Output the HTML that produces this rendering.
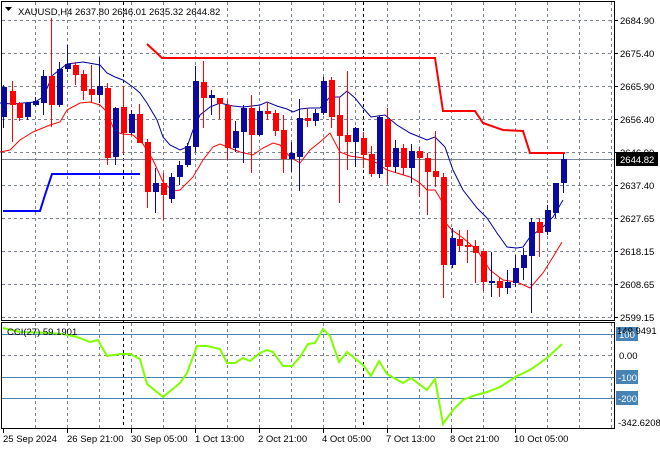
<!DOCTYPE html>
<html><head><meta charset="utf-8"><style>
html,body{margin:0;padding:0;background:#fff}
svg{display:block;font-family:"Liberation Sans",Tahoma,sans-serif;font-size:9.5px}
</style></head><body>
<svg width="660" height="450" viewBox="0 0 660 450" xmlns="http://www.w3.org/2000/svg">
<rect width="660" height="450" fill="#fff"/>
<g stroke="#7a8490" stroke-width="1" stroke-dasharray="3,3" fill="none">
<path d="M2 20.5H614M2 53.5H614M2 86.5H614M2 119.5H614M2 152.5H614M2 185.5H614M2 218.5H614M2 251.5H614M2 284.5H614M2 317.5H614"/>
<path d="M35.5 2V320M67.5 2V320M99.5 2V320M131.5 2V320M163.5 2V320M195.5 2V320M227.5 2V320M259.5 2V320M291.5 2V320M323.5 2V320M355.5 2V320M387.5 2V320M419.5 2V320M451.5 2V320M483.5 2V320M515.5 2V320M547.5 2V320M579.5 2V320M611.5 2V320"/>
<path d="M35.5 323V428M67.5 323V428M99.5 323V428M131.5 323V428M163.5 323V428M195.5 323V428M227.5 323V428M259.5 323V428M291.5 323V428M323.5 323V428M355.5 323V428M387.5 323V428M419.5 323V428M451.5 323V428M483.5 323V428M515.5 323V428M547.5 323V428M579.5 323V428M611.5 323V428"/>
<path d="M2 355.5H614"/>
</g>
<g stroke="#000" stroke-dasharray="3,3"><path d="M123.5 2V428M363.5 2V428"/></g>
<path d="M2 159.5H614" stroke="#7a8490"/>
<g stroke="#4682b4"><path d="M2 334.5H614M2 377.5H614M2 398.5H614"/></g>
<rect x="1.5" y="1.5" width="613" height="319" fill="none" stroke="#000"/>
<rect x="1.5" y="322.5" width="613" height="106" fill="none" stroke="#000"/>
<polyline fill="none" stroke="#0000a0" stroke-width="1" points="0,103 12,104 35,102 43,97 53,75 67,64 83,62 100,65 107,73 115,77 123,80 133,87 140,93 147,103 157,120 163,137 170,145 180,150 187,147 193,130 200,115 210,107 220,103 233,106 243,107 260,105 267,102 277,106 287,109 293,112 300,109 310,108 320,108 330,97 340,97 347,91 355,98 363,108 371,117 385,115 397,125 410,133 427,140 435,137 445,147 453,170 463,190 477,208 487,218 497,233 507,247 517,248 523,247 530,237 543,227 553,217 563,200"/>
<polyline fill="none" stroke="#ff0000" stroke-width="1" points="0,152 10,150 20,140 33,132 50,125 60,122 67,110 80,103 90,102 100,105 107,112 115,132 123,134 133,135 143,144 153,160 163,182 173,191 180,190 193,177 203,160 213,147 220,144 230,148 240,152 253,155 263,148 273,143 280,145 290,157 300,163 310,150 320,142 330,133 340,152 350,156 363,158 377,163 387,170 397,173 410,177 420,183 427,190 435,190 443,203 443,220 452,230 463,238 477,250 490,270 503,280 517,282 530,288 543,273 553,257 562,242"/>
<polyline fill="none" stroke="#ff0000" stroke-width="2" points="147,44 162,58 435,58 443,111 475,111 483,123 503,130 523,131 530,153 565,153"/>
<polyline fill="none" stroke="#0000ff" stroke-width="2" points="3,211 40,211 45,195 52,174 140,174"/>
<g stroke-width="1">
<g fill="#0a0aa0" stroke="#0a0aa0">
<path d="M3.5 85V128M27.5 102V120M35.5 97V106M43.5 70V115M59.5 62V107M67.5 45V72M99.5 57V103M115.5 107V165M131.5 110V135M155.5 168V213M171.5 173V203M179.5 161V185M187.5 143V167M195.5 66V152M211.5 90V115M235.5 121V152M243.5 105V163M259.5 107V136M291.5 142V172M299.5 99V191M315.5 109V126M323.5 77V115M355.5 127V167M379.5 116V178M395.5 140V173M411.5 144V183M452.5 228V268M491.5 252V297M507.5 270V294M515.5 255V287M523.5 248V280M531.5 218V313M547.5 205V235M555.5 183V218M563.5 154V193"/>
<g stroke="none">
<rect x="1" y="87" width="6" height="30"/><rect x="25" y="103" width="6" height="14"/><rect x="33" y="101" width="6" height="4"/><rect x="41" y="76" width="6" height="27"/><rect x="57" y="69" width="6" height="36"/><rect x="65" y="64" width="6" height="5"/><rect x="97" y="86" width="6" height="9"/><rect x="113" y="108" width="6" height="49"/><rect x="129" y="114" width="6" height="19"/><rect x="153" y="183" width="6" height="9"/><rect x="169" y="177" width="6" height="22"/><rect x="177" y="165" width="6" height="12"/><rect x="185" y="146" width="6" height="19"/><rect x="193" y="81" width="6" height="66"/><rect x="209" y="95" width="6" height="3"/><rect x="233" y="131" width="6" height="17"/><rect x="241" y="108" width="6" height="24"/><rect x="257" y="111" width="6" height="24"/><rect x="289" y="153" width="6" height="6"/><rect x="297" y="118" width="6" height="39"/><rect x="313" y="113" width="6" height="8"/><rect x="321" y="81" width="6" height="32"/><rect x="353" y="128" width="6" height="14"/><rect x="377" y="117" width="6" height="57"/><rect x="393" y="148" width="6" height="19"/><rect x="409" y="151" width="6" height="17"/><rect x="450" y="238" width="6" height="27"/><rect x="489" y="281" width="6" height="2"/><rect x="505" y="282" width="6" height="6"/><rect x="513" y="268" width="6" height="15"/><rect x="521" y="255" width="6" height="13"/><rect x="529" y="222" width="6" height="34"/><rect x="545" y="210" width="6" height="22"/><rect x="553" y="183" width="6" height="30"/><rect x="561" y="159" width="6" height="24"/>
</g></g>
<g fill="#ff0000" stroke="#ff0000">
<path d="M12.5 81V142M19.5 102V121M51.5 18V127M75.5 62V85M83.5 70V100M91.5 65V103M107.5 83V165M123.5 86V154M139.5 104V143M147.5 139V208M163.5 173V220M203.5 61V128M219.5 98V119M227.5 100V160M251.5 95V173M267.5 102V120M275.5 110V136M283.5 115V173M307.5 108V127M331.5 77V128M339.5 97V203M347.5 71V170M363.5 132V168M371.5 146V177M387.5 108V184M403.5 144V175M419.5 147V197M427.5 153V215M435.5 131V187M443.5 173V298M459.5 230V252M467.5 230V263M475.5 240V283M483.5 251V291M499.5 277V297M539.5 218V257"/>
<g stroke="none">
<rect x="10" y="91" width="6" height="14"/><rect x="17" y="103" width="6" height="15"/><rect x="49" y="76" width="6" height="29"/><rect x="73" y="65" width="6" height="10"/><rect x="81" y="74" width="6" height="17"/><rect x="89" y="89" width="6" height="6"/><rect x="105" y="88" width="6" height="70"/><rect x="121" y="107" width="6" height="26"/><rect x="137" y="114" width="6" height="29"/><rect x="145" y="142" width="6" height="50"/><rect x="161" y="183" width="6" height="12"/><rect x="201" y="82" width="6" height="16"/><rect x="217" y="98" width="6" height="6"/><rect x="225" y="105" width="6" height="43"/><rect x="249" y="108" width="6" height="27"/><rect x="265" y="111" width="6" height="3"/><rect x="273" y="113" width="6" height="18"/><rect x="281" y="130" width="6" height="29"/><rect x="305" y="118" width="6" height="3"/><rect x="329" y="80" width="6" height="37"/><rect x="337" y="115" width="6" height="21"/><rect x="345" y="135" width="6" height="7"/><rect x="361" y="138" width="6" height="17"/><rect x="369" y="154" width="6" height="20"/><rect x="385" y="119" width="6" height="48"/><rect x="401" y="148" width="6" height="20"/><rect x="417" y="151" width="6" height="7"/><rect x="425" y="158" width="6" height="14"/><rect x="433" y="171" width="6" height="6"/><rect x="441" y="177" width="6" height="88"/><rect x="457" y="239" width="6" height="7"/><rect x="465" y="245" width="6" height="2"/><rect x="473" y="246" width="6" height="7"/><rect x="481" y="251" width="6" height="31"/><rect x="497" y="281" width="6" height="7"/><rect x="537" y="222" width="6" height="11"/>
</g></g></g>
<polyline fill="none" stroke="#7fff00" stroke-width="2" points="3,328 20,332 50,333 63,334 77,337 90,342 98,340 107,356 120,354 130,354 140,359 147,384 163,397 180,383 187,373 197,346 207,346 220,349 227,363 235,363 243,358 250,361 260,353 267,350 273,352 283,366 292,366 300,357 308,344 315,343 323,329 330,336 339,362 347,352 363,365 371,376 379,361 387,374 403,383 411,378 427,390 435,379 443,424 453,410 463,400 473,396 487,392 500,387 517,376 530,370 547,358 562,344"/>
<text x="7" y="335" fill="#000">CCI(27) 59.1901</text>
<path d="M5 7H12L8.5 11Z" fill="#000"/>
<text x="18" y="15" fill="#000">XAUUSD,H4  2637.80 2646.01 2635.32 2644.82</text>
<g fill="#000">
<text x="620" y="24">2684.90</text><text x="620" y="57">2675.40</text><text x="620" y="90">2665.90</text><text x="620" y="123">2656.40</text><text x="620" y="156">2646.90</text><text x="620" y="189">2637.40</text><text x="620" y="222">2627.65</text><text x="620" y="255">2618.15</text><text x="620" y="288">2608.65</text><text x="620" y="321">2599.15</text>
</g>
<g stroke="#000"><path d="M614 20.5h4M614 53.5h4M614 86.5h4M614 119.5h4M614 152.5h4M614 185.5h4M614 218.5h4M614 251.5h4M614 284.5h4M614 317.5h4"/></g>
<rect x="616" y="152" width="42" height="14" fill="#000"/>
<text x="620" y="163" fill="#fff">2644.82</text>
<rect x="616" y="327" width="22" height="14" fill="#4682b4"/>
<text x="617" y="334" fill="#000">149.9491</text>
<text x="619" y="338" fill="#fff">100</text>
<text x="619" y="359" fill="#000">0.00</text>
<rect x="616" y="370" width="22" height="14" fill="#4682b4"/><text x="618" y="381" fill="#fff">-100</text>
<rect x="616" y="391" width="22" height="14" fill="#4682b4"/><text x="618" y="402" fill="#fff">-200</text>
<text x="618" y="426" fill="#000">-342.6208</text>
<g fill="#000">
<text x="3" y="442">25 Sep 2024</text><text x="67" y="442">26 Sep 21:00</text><text x="131" y="442">30 Sep 05:00</text><text x="195" y="442">1 Oct 13:00</text><text x="258" y="442">2 Oct 21:00</text><text x="322" y="442">4 Oct 05:00</text><text x="386" y="442">7 Oct 13:00</text><text x="450" y="442">8 Oct 21:00</text><text x="514" y="442">10 Oct 05:00</text>
</g>
<g stroke="#000"><path d="M3.5 429v4M67.5 429v4M131.5 429v4M195.5 429v4M259.5 429v4M323.5 429v4M387.5 429v4M451.5 429v4M515.5 429v4"/></g>
</svg>
</body></html>
